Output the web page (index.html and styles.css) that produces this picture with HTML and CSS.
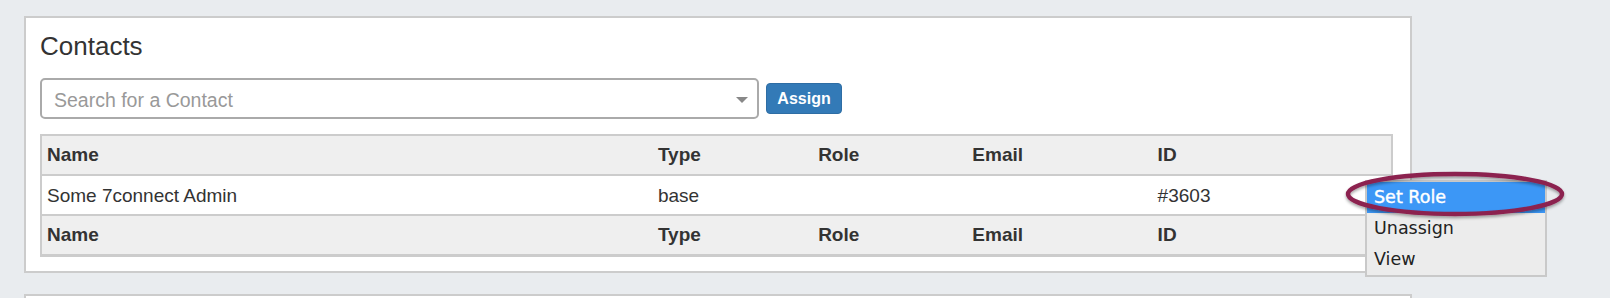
FILE: index.html
```html
<!DOCTYPE html>
<html>
<head>
    <meta name="viewport" content="width=device-width, initial-scale=1.0">
    <link rel="stylesheet" href="styles.css">
</head>
<body>
    <div class="page">
        <div class="panel">
            <h2 class="panel-title">Contacts</h2>

            <div class="assign-row">
                <div class="contact-select">
                    <input type="text" placeholder="Search for a Contact">
                    <span class="caret"></span>
                </div>
                <button class="assign-btn">Assign</button>
            </div>

            <table class="contacts">
                <colgroup>
                    <col class="col-name">
                    <col class="col-type">
                    <col class="col-role">
                    <col class="col-email">
                    <col class="col-id">
                </colgroup>
                <thead>
                    <tr>
                        <th>Name</th>
                        <th>Type</th>
                        <th>Role</th>
                        <th>Email</th>
                        <th>ID</th>
                    </tr>
                </thead>
                <tbody>
                    <tr>
                        <td>Some 7connect Admin</td>
                        <td>base</td>
                        <td></td>
                        <td></td>
                        <td>#3603</td>
                    </tr>
                </tbody>
                <tfoot>
                    <tr>
                        <th>Name</th>
                        <th>Type</th>
                        <th>Role</th>
                        <th>Email</th>
                        <th>ID</th>
                    </tr>
                </tfoot>
            </table>

            <!-- Context menu for the contact row -->
            <ul class="context-menu">
                <li class="active">Set Role</li>
                <li>Unassign</li>
                <li>View</li>
            </ul>

            <svg class="highlight-ring" width="224" height="52" viewBox="0 0 224 52">
                <defs>
                    <filter id="ringShadow" x="-10%" y="-30%" width="120%" height="160%">
                        <feDropShadow dx="0" dy="2" stdDeviation="1.5" flood-color="#000" flood-opacity="0.35"/>
                    </filter>
                </defs>
                <ellipse cx="112" cy="23" rx="107" ry="20" fill="none" stroke="#8c2350" stroke-width="4.5" filter="url(#ringShadow)"/>
            </svg>
        </div>

        <div class="panel panel-next"></div>
    </div>
</body>
</html>
```

FILE: styles.css
```css
/* Basic page setup */
html, body {
    overflow: hidden;
}

body {
    font-family: "Liberation Sans", Arial, sans-serif;
    background: #e9ecef;
    color: #333;
    margin: 0;
}

.page {
    padding: 16px 0 0 24px;
}

/* Panels */
.panel {
    box-sizing: border-box;
    width: 1388px;
    background: white;
    border: 2px solid #cccccc;
    padding: 13px 14px 14px;
    position: relative;
}

.panel-next {
    margin-top: 21px;
    height: 40px;
    padding: 0;
}

.panel-title {
    font-size: 26px;
    font-weight: normal;
    line-height: 30px;
    margin: 0 0 17px;
    color: #333;
}

/* Search + assign */
.assign-row {
    display: flex;
    align-items: center;
    gap: 7px;
}

.contact-select {
    width: 715px;
    height: 37px;
    border: 2px solid #aaaaaa;
    border-radius: 5px;
    display: flex;
    align-items: center;
    position: relative;
}

.contact-select input {
    border: none;
    outline: none;
    flex: 1;
    font-family: "Liberation Sans", Arial, sans-serif;
    font-size: 19.5px;
    padding: 3px 0 0 12px;
    color: #555;
    background: transparent;
}

.contact-select input::placeholder {
    color: #999;
}

.caret {
    width: 0;
    height: 0;
    border-left: 6px solid transparent;
    border-right: 6px solid transparent;
    border-top: 6px solid #888;
    margin: 3px 9px 0 0;
}

.assign-btn {
    width: 76px;
    height: 31px;
    background: #337ab7;
    border: 1px solid #2e6da4;
    border-radius: 4px;
    color: white;
    font-family: "Liberation Sans", Arial, sans-serif;
    font-size: 16px;
    font-weight: bold;
    padding: 0;
}

/* Contacts table */
.contacts {
    margin-top: 15px;
    width: 1353px;
    table-layout: fixed;
    border-collapse: collapse;
    border: 2px solid #cccccc;
    border-bottom-width: 3px;
    font-size: 19px;
}

.col-name { width: 611px; }
.col-type { width: 160px; }
.col-role { width: 154px; }
.col-email { width: 185px; }
.col-id { width: 239px; }

.contacts th,
.contacts td {
    height: 38px;
    padding: 0 5px;
    text-align: left;
    border-bottom: 2px solid #cccccc;
}

.contacts tbody td {
    height: 37px;
    padding-top: 1px;
}

.contacts thead th,
.contacts tfoot th {
    background: #efefef;
    font-weight: bold;
}

.contacts tfoot th {
    border-bottom: none;
}

/* Context menu */
.context-menu {
    position: absolute;
    left: 1339px;
    top: 162px;
    width: 178px;
    margin: 0;
    padding: 0;
    list-style: none;
    background: #ececec;
    border: 2px solid #c9c9c9;
    font-family: "DejaVu Sans", Verdana, sans-serif;
    font-size: 17.5px;
    color: #222;
    z-index: 5;
}

.context-menu li {
    height: 31px;
    line-height: 31px;
    padding-left: 7px;
}

.context-menu li.active {
    background: #3c97f6;
    color: white;
    -webkit-text-stroke: 0.4px white;
}

.highlight-ring {
    position: absolute;
    left: 1317px;
    top: 153px;
    z-index: 6;
}
```
